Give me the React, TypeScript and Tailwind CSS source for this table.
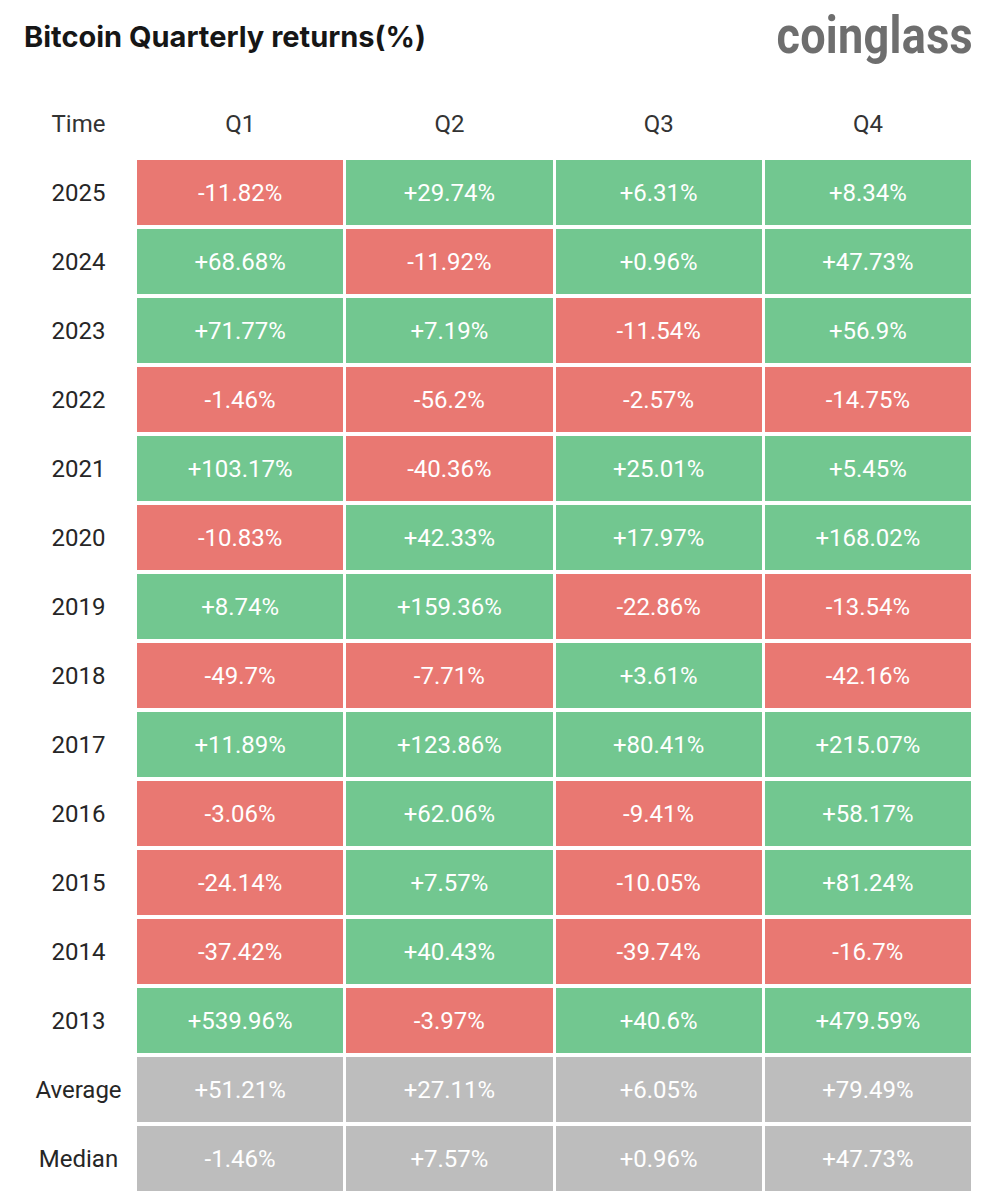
import React from 'react';

type Row = { label: string; values: string[]; kind?: 'stat' };

const rows: Row[] = [
  { label: '2025', values: ['-11.82%', '+29.74%', '+6.31%', '+8.34%'] },
  { label: '2024', values: ['+68.68%', '-11.92%', '+0.96%', '+47.73%'] },
  { label: '2023', values: ['+71.77%', '+7.19%', '-11.54%', '+56.9%'] },
  { label: '2022', values: ['-1.46%', '-56.2%', '-2.57%', '-14.75%'] },
  { label: '2021', values: ['+103.17%', '-40.36%', '+25.01%', '+5.45%'] },
  { label: '2020', values: ['-10.83%', '+42.33%', '+17.97%', '+168.02%'] },
  { label: '2019', values: ['+8.74%', '+159.36%', '-22.86%', '-13.54%'] },
  { label: '2018', values: ['-49.7%', '-7.71%', '+3.61%', '-42.16%'] },
  { label: '2017', values: ['+11.89%', '+123.86%', '+80.41%', '+215.07%'] },
  { label: '2016', values: ['-3.06%', '+62.06%', '-9.41%', '+58.17%'] },
  { label: '2015', values: ['-24.14%', '+7.57%', '-10.05%', '+81.24%'] },
  { label: '2014', values: ['-37.42%', '+40.43%', '-39.74%', '-16.7%'] },
  { label: '2013', values: ['+539.96%', '-3.97%', '+40.6%', '+479.59%'] },
  { label: 'Average', values: ['+51.21%', '+27.11%', '+6.05%', '+79.49%'], kind: 'stat' },
  { label: 'Median', values: ['-1.46%', '+7.57%', '+0.96%', '+47.73%'], kind: 'stat' },
];

function cellColor(row: Row, v: string) {
  if (row.kind === 'stat') return 'bg-[#bdbdbd]';
  return v.startsWith('-') ? 'bg-[#e97872]' : 'bg-[#72c790]';
}

export default function App() {
  return (
    <div className="w-[985px] h-[1200px] overflow-hidden bg-white font-['Roboto',sans-serif]">
      {/* header: title + logo */}
      <div className="flex items-start justify-between pl-6 pr-[12px] pt-[19px] h-[91px]">
        <h1 className="font-['Inter',sans-serif] font-bold text-[29px] leading-[36px] tracking-[0px] text-[#161616]">
          Bitcoin Quarterly returns(%)
        </h1>
        <div className="-mt-[15px] font-['Roboto',sans-serif] font-bold text-[45px] leading-[56px] tracking-[0.3px] text-[#6e6e6e] scale-y-[1.15] origin-top">
          coinglass
        </div>
      </div>

      {/* table */}
      <div className="w-[971px] grid grid-cols-[134px_repeat(4,1fr)] gap-x-[3px] gap-y-[4px] auto-rows-[65px]">
        <div className="flex items-center justify-center pl-[23px] text-[24px] text-[#333]">Time</div>
        {['Q1', 'Q2', 'Q3', 'Q4'].map((q) => (
          <div key={q} className="flex items-center justify-center text-[24px] text-[#333]">
            {q}
          </div>
        ))}
        {rows.map((row) => (
          <React.Fragment key={row.label}>
            <div className="flex items-center justify-center pl-[23px] text-[24px] text-[#262626]">
              {row.label}
            </div>
            {row.values.map((v, i) => (
              <div
                key={i}
                className={`flex items-center justify-center text-[24px] text-white ${cellColor(row, v)}`}
              >
                {v}
              </div>
            ))}
          </React.Fragment>
        ))}
      </div>
    </div>
  );
}
